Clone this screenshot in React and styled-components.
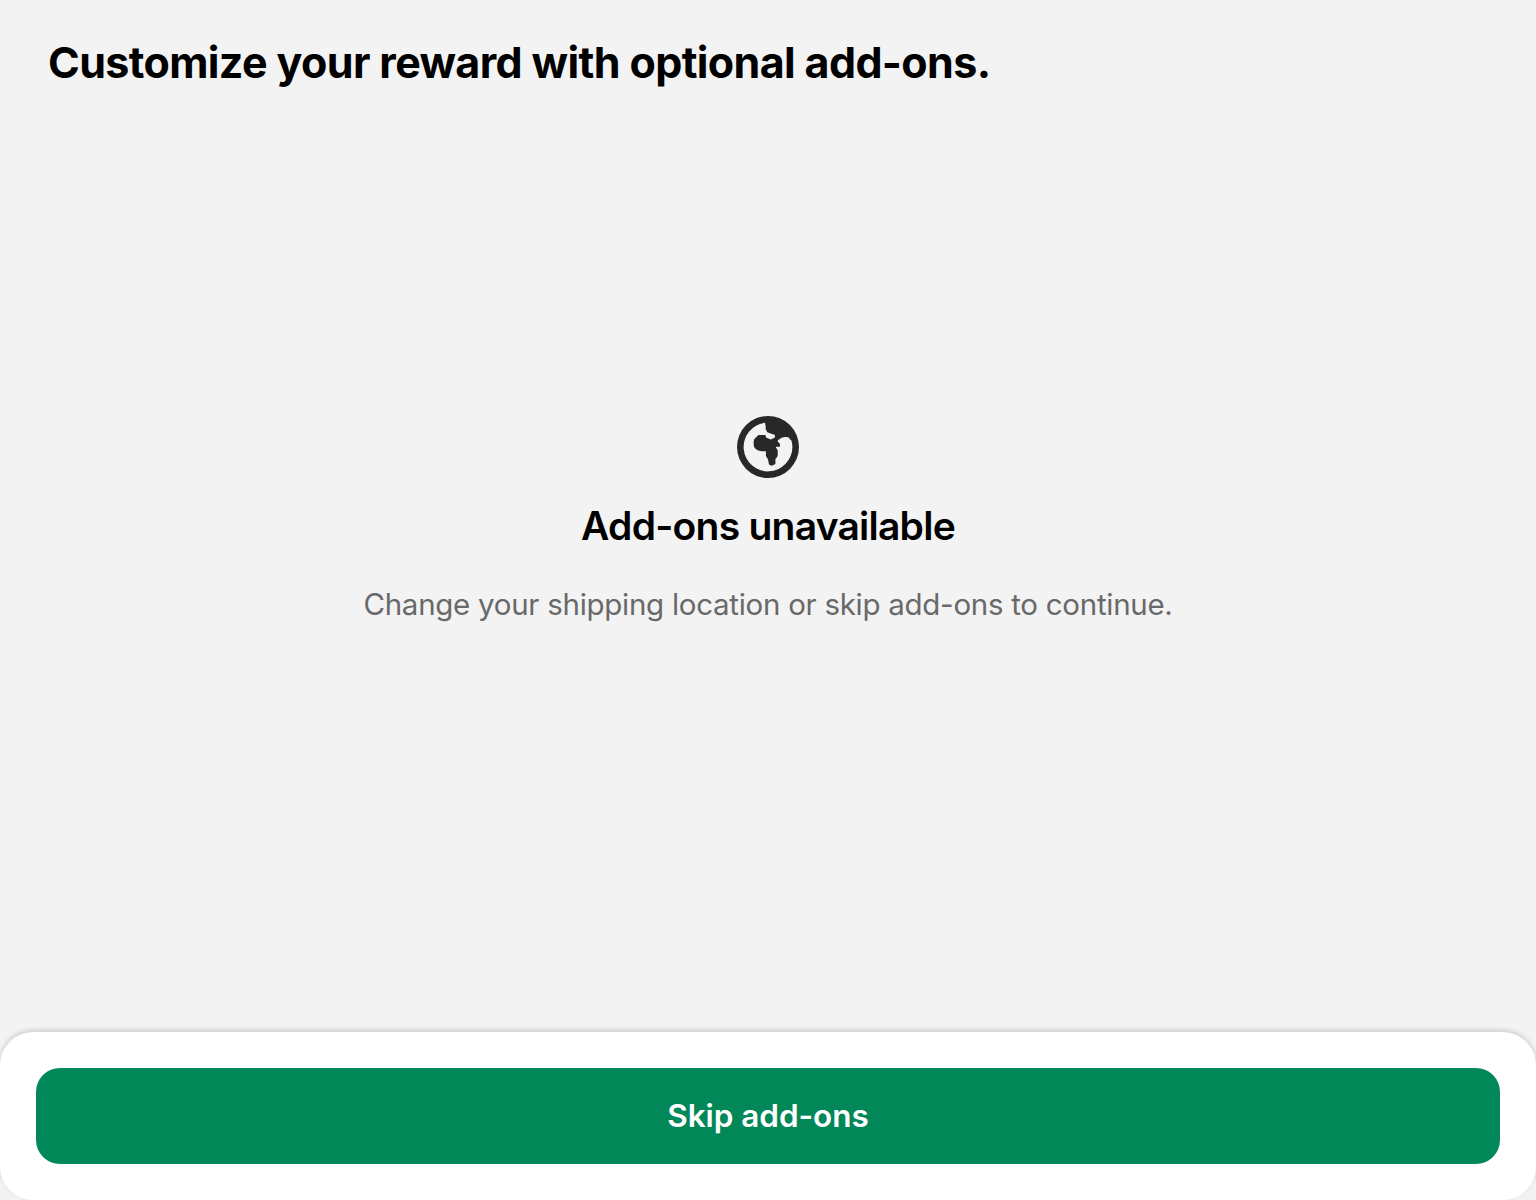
import React from 'react';
import styled, { createGlobalStyle } from 'styled-components';

const Global = createGlobalStyle`
  * { box-sizing: border-box; }
  body { margin: 0; background: #f3f3f3; font-family: Inter, "Liberation Sans", sans-serif; }
`;
const Page = styled.div`
  height: 1200px;
  display: flex;
  flex-direction: column;
  overflow: hidden;
`;
const Title = styled.h1`
  margin: 0;
  padding: 35px 48px 0;
  font-size: 43px;
  line-height: 55px;
  font-weight: 700;
  letter-spacing: -0.63px;
  color: #000;
  white-space: nowrap;
`;
const Empty = styled.main`
  flex: 1;
  display: flex;
  flex-direction: column;
  align-items: center;
  padding-top: 326px;
`;
const Globe = styled.svg`
  width: 62px;
  height: 62px;
  display: block;
`;
const Heading = styled.h2`
  margin: 24px 0 0;
  font-size: 39px;
  line-height: 48px;
  font-weight: 600;
  letter-spacing: -0.76px;
  color: #000;
  white-space: nowrap;
`;
const Message = styled.p`
  margin: 36px 0 0;
  font-size: 29.5px;
  line-height: 36px;
  letter-spacing: -0.28px;
  color: #696969;
  white-space: nowrap;
`;
const Footer = styled.footer`
  height: 168px;
  padding: 36px;
  border-radius: 33px;
  background: #fff;
  box-shadow: 0 -2px 5px rgba(0, 0, 0, 0.16);
`;
const Button = styled.button`
  width: 100%;
  height: 96px;
  padding: 0;
  border: 0;
  border-radius: 24px;
  background: #028858;
  color: #fff;
  font: 600 31.5px/40px Inter, "Liberation Sans", sans-serif;
  letter-spacing: -0.06px;
`;

export default function App() {
  return (
    <Page>
      <Global />
      <Title>Customize your reward with optional add-ons.</Title>
      <Empty>
        <Globe viewBox="0 0 62 62" aria-hidden="true">
          <circle cx="31" cy="31" r="31" fill="#282828" />
          <path
            fill="#f3f3f3"
            d="M27.8 6.8A24.4 24.4 0 1 0 55.4 31C55.4 28.5 55 26.3 54.3 24.2L52.8 23.3L52 21.6Q48.5 20.4 44.6 21.7L41.2 23.9L40.6 25.3L43 28V30.8H39.2L38.8 31.6L40.7 34V39.5Q40 41.5 38.4 43V48L36.5 49L34.3 49.8L32 48.6L31 43.6L28.9 40V35.3H24.5Q19.5 34.7 17.1 31Q16.2 27 17.1 23.3L21.5 19H28.3L29.4 21.8L33.8 23.4L37.9 21.5V19L30.3 16.2L28.6 13Q29 10 27.8 6.8Z"
          />
        </Globe>
        <Heading>Add-ons unavailable</Heading>
        <Message>Change your shipping location or skip add-ons to continue.</Message>
      </Empty>
      <Footer>
        <Button type="button">Skip add-ons</Button>
      </Footer>
    </Page>
  );
}
